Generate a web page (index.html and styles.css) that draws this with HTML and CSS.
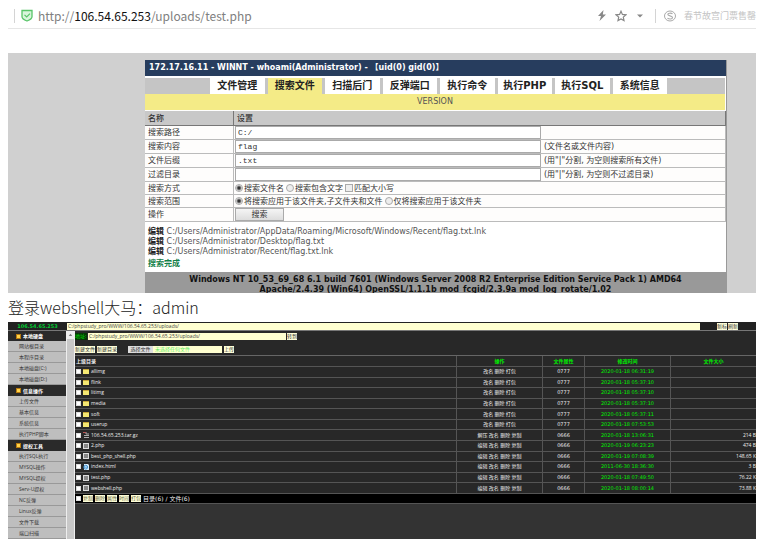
FILE: index.html
```
<!DOCTYPE html>
<html lang="zh-CN">
<head>
<meta charset="utf-8">
<title>test.php</title>
<link rel="stylesheet" href="styles.css">
</head>
<body>
<header class="browser">
  <span class="divider"></span>
  <svg class="shield" viewBox="0 0 12 13"><path d="M1 1.500h10v6.300c0 2.300-2.500 3.300-5 4.200-2.500-.9-5-1.900-5-4.200z" fill="#d9f5dc" stroke="#58c468" stroke-width="1.300"/><path d="M3.500 5.800l2.200 2.200 3.300-3.300" fill="none" stroke="#58c468" stroke-width="1.200"/></svg>
  <a class="url" href="#">http://<b>106.54.65.253</b>/uploads/test.php</a>
  <svg class="bolt" viewBox="0 0 10 11"><path d="M6.500 0L1 6h3L2.500 11 9 4.500H5.800z" fill="#888"/></svg>
  <svg class="star" viewBox="0 0 12 12"><path d="M6 1.200l1.400 3.200 3.500.4-2.600 2.300.7 3.500L6 8.900l-3 1.700.7-3.500L1.100 4.800l3.500-.4z" fill="none" stroke="#888" stroke-width="1.200"/></svg>
  <svg class="caret" viewBox="0 0 6 4"><path d="M0 .5h6L3 3.500z" fill="#888"/></svg>
  <span class="divider"></span>
  <svg class="sogou" viewBox="0 0 12 12"><ellipse cx="6" cy="6" rx="5.500" ry="5" fill="none" stroke="#aaa"/><path d="M8.500 3.800C7 2.800 3.800 2.900 3.800 4.500S8.500 5.600 8.500 7.500 5 9.300 3.400 8.100" fill="none" stroke="#aaa" stroke-width="1.100"/></svg>
  <span class="hot">春节故宫门票售罄</span>
</header>

<main>
<section class="stage">
  <div class="shell">
    <h1 class="shell-title">172.17.16.11 - WINNT - whoami(Administrator) - 【uid(0) gid(0)】</h1>
    <nav class="tabs">
      <a href="#">文件管理</a><a href="#" class="on">搜索文件</a><a href="#">扫描后门</a><a href="#">反弹端口</a><a href="#">执行命令</a><a href="#">执行PHP</a><a href="#">执行SQL</a><a href="#">系统信息</a>
    </nav>
    <div class="version">VERSION</div>
    <form class="search">
      <table class="settings">
        <thead><tr><th>名称</th><th>设置</th></tr></thead>
        <tbody>
          <tr><td><label for="path">搜索路径</label></td><td><div class="field"><input type="text" id="path" value="C:/"></div></td></tr>
          <tr><td><label for="content">搜索内容</label></td><td><div class="field"><input type="text" id="content" value="flag"><span>(文件名或文件内容)</span></div></td></tr>
          <tr><td><label for="ext">文件后缀</label></td><td><div class="field"><input type="text" id="ext" value=".txt"><span>(用"|"分割, 为空则搜索所有文件)</span></div></td></tr>
          <tr><td><label for="skip">过滤目录</label></td><td><div class="field"><input type="text" id="skip"><span>(用"|"分割, 为空则不过滤目录)</span></div></td></tr>
          <tr class="short"><td>搜索方式</td><td><div class="choices"><label><input type="radio" name="mode" checked>搜索文件名</label><label><input type="radio" name="mode">搜索包含文字</label><label><input type="checkbox">匹配大小写</label></div></td></tr>
          <tr class="short"><td>搜索范围</td><td><div class="choices"><label><input type="radio" name="scope" checked>将搜索应用于该文件夹,子文件夹和文件</label><label><input type="radio" name="scope">仅将搜索应用于该文件夹</label></div></td></tr>
          <tr><td>操作</td><td><button type="button" class="go">搜索</button></td></tr>
        </tbody>
      </table>
    </form>
    <ul class="results">
      <li><a href="#">编辑</a> C:/Users/Administrator/AppData/Roaming/Microsoft/Windows/Recent/flag.txt.lnk</li>
      <li><a href="#">编辑</a> C:/Users/Administrator/Desktop/flag.txt</li>
      <li><a href="#">编辑</a> C:/Users/Administrator/Recent/flag.txt.lnk</li>
      <li class="done">搜索完成</li>
    </ul>
    <footer class="server">Windows NT 10_53_69_68 6.1 build 7601 (Windows Server 2008 R2 Enterprise Edition Service Pack 1) AMD64<br>Apache/2.4.39 (Win64) OpenSSL/1.1.1b mod_fcgid/2.3.9a mod_log_rotate/1.02</footer>
  </div>
</section>

<p class="caption">登录webshell大马：admin</p>

<section class="manager">
  <div class="topbar">
    <strong>106.54.65.253</strong>
    <input type="text" aria-label="路径" value="C:/phpstudy_pro/WWW/106.54.65.253/uploads/">
    <div class="topbar-actions"><button type="button">新标</button><button type="button">刷新</button></div>
  </div>
  <div class="panes">
    <nav class="side">
      <h2><i></i>本地硬盘</h2>
      <a href="#">网站根目录</a><a href="#">本程序目录</a><a href="#">本地磁盘(C:)</a><a href="#">本地磁盘(D:)</a>
      <h2><i></i>信息操作</h2>
      <a href="#">上传文件</a><a href="#">基本信息</a><a href="#">系统信息</a><a href="#">执行PHP脚本</a>
      <h2><i></i>提权工具</h2>
      <a href="#">执行SQL执行</a><a href="#">MYSQL操作</a><a href="#">MYSQL提权</a><a href="#">Serv-U提权</a><a href="#">NC反弹</a><a href="#">Linux反弹</a><a href="#">文件下载</a><a href="#">端口扫描</a>
    </nav>
    <div class="scroll"><svg viewBox="0 0 8 8"><path d="M2 5l2-2.500L6 5z" fill="#777"/></svg></div>
    <div class="files">
      <div class="addr"><label for="addr">地址:</label><input type="text" id="addr" value="C:/phpstudy_pro/WWW/106.54.65.253/uploads/"><button type="button">转到</button></div>
      <div class="tools"><button type="button">新建文件</button><button type="button">新建目录</button><div class="picker"><button type="button">选择文件</button><span>未选择任何文件</span></div><button type="button">上传</button></div>
      <table class="list">
        <colgroup><col class="c-name"><col class="c-op"><col class="c-attr"><col class="c-time"><col class="c-size"></colgroup>
        <thead><tr><th>上级目录</th><th>操作</th><th>文件属性</th><th>修改时间</th><th>文件大小</th></tr></thead>
        <tbody>
          <tr><td><label><input type="checkbox"><i class="dir"></i>allimg</label></td><td>改名 删除 打包</td><td>0777</td><td>2020-01-18 06:31:19</td><td></td></tr>
          <tr><td><label><input type="checkbox"><i class="dir"></i>flink</label></td><td>改名 删除 打包</td><td>0777</td><td>2020-01-18 05:37:10</td><td></td></tr>
          <tr><td><label><input type="checkbox"><i class="dir"></i>litimg</label></td><td>改名 删除 打包</td><td>0777</td><td>2020-01-18 05:37:10</td><td></td></tr>
          <tr><td><label><input type="checkbox"><i class="dir"></i>media</label></td><td>改名 删除 打包</td><td>0777</td><td>2020-01-18 05:37:10</td><td></td></tr>
          <tr><td><label><input type="checkbox"><i class="dir"></i>soft</label></td><td>改名 删除 打包</td><td>0777</td><td>2020-01-18 05:37:11</td><td></td></tr>
          <tr><td><label><input type="checkbox"><i class="dir"></i>userup</label></td><td>改名 删除 打包</td><td>0777</td><td>2020-01-18 07:53:53</td><td></td></tr>
          <tr><td><label><input type="checkbox"><svg viewBox="0 0 6 6"><path d="M0 0h3v2h3M1 3.500h5M1 5.500h5" fill="none" stroke="#aaa"/><path d="M0 .5h3" stroke="#b55"/></svg>106.54.65.253.tar.gz</label></td><td>解压 改名 删除 复制</td><td>0666</td><td>2020-01-18 13:06:31</td><td>214 B</td></tr>
          <tr><td><label><input type="checkbox"><i class="doc"></i>2.php</label></td><td>编辑 改名 删除 复制</td><td>0666</td><td>2020-01-19 06:23:23</td><td>474 B</td></tr>
          <tr><td><label><input type="checkbox"><i class="doc"></i>best_php_shell.php</label></td><td>编辑 改名 删除 复制</td><td>0666</td><td>2020-01-19 07:08:39</td><td>148.65 K</td></tr>
          <tr><td><label><input type="checkbox"><svg viewBox="0 0 6 6"><path d="M1 0h4l1 1v5H1z" fill="#d8ecfa"/><circle cx="2.700" cy="3.200" r="1.900" fill="none" stroke="#3a8fd0"/><path d="M1 3.200h3.500" stroke="#3a8fd0" stroke-width=".7"/></svg>index.html</label></td><td>编辑 改名 删除 复制</td><td>0666</td><td>2011-06-30 18:36:30</td><td>3 B</td></tr>
          <tr><td><label><input type="checkbox"><i class="doc"></i>test.php</label></td><td>编辑 改名 删除 复制</td><td>0666</td><td>2020-01-18 07:49:50</td><td>76.22 K</td></tr>
          <tr><td><label><input type="checkbox"><i class="doc"></i>webshell.php</label></td><td>编辑 改名 删除 复制</td><td>0666</td><td>2020-01-18 08:00:14</td><td>73.88 K</td></tr>
        </tbody>
      </table>
      <div class="batch"><input type="checkbox" aria-label="全选"><button type="button">复制</button><button type="button">删除</button><button type="button">属性</button><button type="button">时间</button><button type="button">打包</button><span>目录(6) / 文件(6)</span></div>
    </div>
  </div>
</section>
</main>
</body>
</html>
```
FILE: styles.css
```
* { box-sizing: border-box; }

body {
  margin: 0;
  padding: 0 9px 0 8px;
  background: #fff;
  color: #333;
  font-family: "DejaVu Sans", "Noto Sans CJK SC", sans-serif;
  font-size: 8px;
}

a { color: inherit; text-decoration: none; }
button, input { font: inherit; margin: 0; padding: 0; border: 0; border-radius: 0; }

/* Browser address bar */
.browser {
  display: flex;
  align-items: center;
  height: 29px;
  padding: 3px 0 0 6px;
  border-bottom: 1px solid #e6e6e6;
}
.divider { flex: none; width: 1px; height: 14px; background: #d4d4d4; }
.shield { flex: none; width: 12px; height: 13px; margin: 0 5px 0 6px; }
.url { flex: 1; color: #808080; font: 12px/16px "Noto Sans CJK SC", sans-serif; }
.url b { color: #111; font-weight: 400; }
.bolt { width: 10px; height: 11px; margin-right: 8px; }
.star { width: 12px; height: 12px; margin-right: 10px; }
.caret { width: 6px; height: 4px; margin-right: 12px; }
.sogou { width: 12px; height: 12px; margin: 0 8px; }
.hot {
  flex: none;
  white-space: nowrap;
  color: #c4c4c4;
  font: 9px/14px "Noto Sans CJK SC", sans-serif;
}

/* Search shell */
.stage {
  margin-top: 24px;
  padding: 7px 29px 0 137px;
  background: #d0d0d0;
}
.shell {
  background: #fff;
  border-right: 1px solid #999;
}
.shell-title {
  margin: 0;
  padding-left: 4px;
  background: #273d5e;
  color: #fff;
  font-size: 8px;
  line-height: 16px;
  white-space: nowrap;
}
.tabs {
  display: flex;
  gap: 3px;
  margin: 2px 1px 0 0;
  padding: 0 58px 0 65px;
  background: #c5c5c5;
}
.tabs a {
  flex: 1;
  background: #fff;
  color: #222;
  font-size: 10px;
  font-weight: 700;
  line-height: 16px;
  text-align: center;
  white-space: nowrap;
}
.tabs .on { background: #f4eb87; }
.version {
  margin-right: 1px;
  background: #f4eb87;
  color: #555;
  line-height: 16px;
  text-align: center;
}
.settings {
  width: 100%;
  margin-top: 1px;
  border-spacing: 0;
  line-height: 11px;
}
.settings th {
  height: 15px;
  padding: 0 3px;
  background: #c8c8c8;
  border: 1px solid #777;
  border-width: 0 1px 1px 0;
  color: #333;
  font-weight: 500;
  text-align: left;
}
.settings th:first-child { width: 89px; }
.settings td {
  height: 14px;
  padding: 0 1px;
  border-right: 1px solid #bbb;
  border-bottom: 1px solid #bbb;
  background: #fefdfc;
}
.settings td:first-child { padding-left: 3px; }
.settings .short td { height: 13px; }
.field { display: flex; align-items: center; gap: 3px; }
.field input {
  width: 306px;
  height: 13px;
  padding: 0 2px;
  border: 1px solid #aaa;
  background: #fff;
  color: #333;
  font: 8px/11px "Liberation Mono", monospace;
}
.choices { display: flex; gap: 2px; }
.choices label { display: flex; align-items: center; gap: 1px; }
.choices input {
  appearance: none;
  width: 8px;
  height: 8px;
  border: 1px solid #aaa;
  background: #eee;
}
.choices input[type="radio"] { border-radius: 50%; }
.choices input[type="radio"]:checked { background: radial-gradient(circle, #333 0 1px, #eee 3px); }
.go {
  display: block;
  width: 49px;
  height: 13px;
  border: 1px solid #aaa;
  background: linear-gradient(#f5f5f5, #ddd);
  color: #333;
  line-height: 11px;
}
.results {
  margin: 0;
  padding: 5px 3px 3px;
  list-style: none;
  color: #555;
  line-height: 10px;
  white-space: nowrap;
}
.results a { color: #222; font-weight: 700; }
.results .done { padding-top: 1px; color: #138048; font-weight: 700; line-height: 11px; }
.server {
  height: 21px;
  padding-top: 3px;
  overflow: hidden;
  background: #999;
  color: #111;
  font-weight: 700;
  line-height: 10px;
  text-align: center;
  white-space: nowrap;
}

.caption {
  margin: 0;
  color: #222;
  font: 300 16px/29px "Noto Sans CJK SC", sans-serif;
}

/* File manager */
.manager {
  overflow: hidden;
  background: #333;
  color: #eee;
  font: 5px/7px "Open Sans", "Noto Sans CJK SC", sans-serif;
}
.manager button {
  flex: none;
  background: #ffffd8;
  color: #333;
  line-height: 7px;
  white-space: nowrap;
}
.manager input[type="text"] { height: 7px; padding: 0 1px; background: #ffffd0; color: #444; }
.manager input[type="checkbox"] {
  appearance: none;
  flex: none;
  width: 5px;
  height: 5px;
  background: #fff;
  border: 1px solid #ddd;
}
.topbar {
  display: flex;
  align-items: center;
  height: 9px;
  border-bottom: 1px solid #777;
  background: #222;
}
.topbar strong { width: 59px; color: #0c3; font-family: "DejaVu Sans", sans-serif; text-align: center; }
.topbar > input { flex: 1; min-width: 0; }
.topbar-actions { display: flex; gap: 1px; width: 56px; padding-left: 17px; }
.panes { display: grid; grid-template-columns: 58px 9px 1fr; }
.side { background: #bebebe; color: #333; }
.side h2 {
  display: flex;
  align-items: center;
  gap: 2px;
  height: 10px;
  margin: 0;
  padding-left: 8px;
  background: #2a2a2a;
  color: #fff;
  font: 700 5px/10px "Noto Sans CJK SC", sans-serif;
}
.side h2 i { width: 5px; height: 5px; border: 1px solid #b87a10; background: #ffd34a; }
.side a {
  display: block;
  height: 11px;
  padding-left: 11px;
  border-bottom: 1px solid #999;
  line-height: 10px;
}
.side h2 ~ h2 { height: 11px; }
.scroll { background: #c8c8c8; border: 1px solid #eee; border-width: 0 1px; }
.scroll svg { display: block; width: 7px; height: 8px; background: #eee; }
.files { min-width: 0; background: #333; }
.addr, .tools { display: flex; align-items: center; background: #282828; }
.addr { gap: 1px; height: 10px; }
.addr label { width: 12px; color: #0d0; background: #063806; }
.addr input { width: 198px; }
.tools { gap: 2px; height: 14px; padding-top: 3px; }
.picker { display: flex; width: 94px; margin-left: 9px; background: #ffffd0; color: #6e6; }
.picker button { width: 25px; margin-right: 2px; background: #ddd; }
.list {
  width: 100%;
  height: 139px;
  border-spacing: 0;
  border-top: 1px solid #666;
  background: #282828;
  table-layout: fixed;
}
.c-op { width: 86px; }
.c-attr { width: 42px; }
.c-time { width: 86px; }
.c-size { width: 85px; }
.list th, .list td {
  padding: 0 1px;
  border-right: 1px solid #555;
  border-bottom: 1px solid #555;
  text-align: center;
  white-space: nowrap;
}
.list th { height: 11px; color: #0e0; font-weight: 700; }
.list th:first-child { color: #eee; text-align: left; }
.list td:first-child { text-align: left; }
.list td:nth-child(3) { font-family: "DejaVu Sans", sans-serif; }
.list td:nth-child(4) { color: #0e0; font-family: "DejaVu Sans", sans-serif; }
.list td:last-child { padding: 0; text-align: right; }
.list th:last-child, .list td:last-child { border-right: 0; }
.list label { display: flex; align-items: center; gap: 2px; }
.list svg { width: 6px; height: 6px; }
.dir { width: 6px; height: 5px; background: #f5e873; border-top: 1px solid #c9a83a; }
.doc { width: 6px; height: 6px; border: 1px solid #ddd; background: #888; }
.batch {
  display: flex;
  align-items: center;
  gap: 2px;
  height: 10px;
  padding-left: 1px;
  border-bottom: 1px solid #555;
  background: #000;
  font-family: "DejaVu Sans", "Noto Sans CJK SC", sans-serif;
}
.batch button { color: #664; }
.batch span { font-size: 6px; }
```
